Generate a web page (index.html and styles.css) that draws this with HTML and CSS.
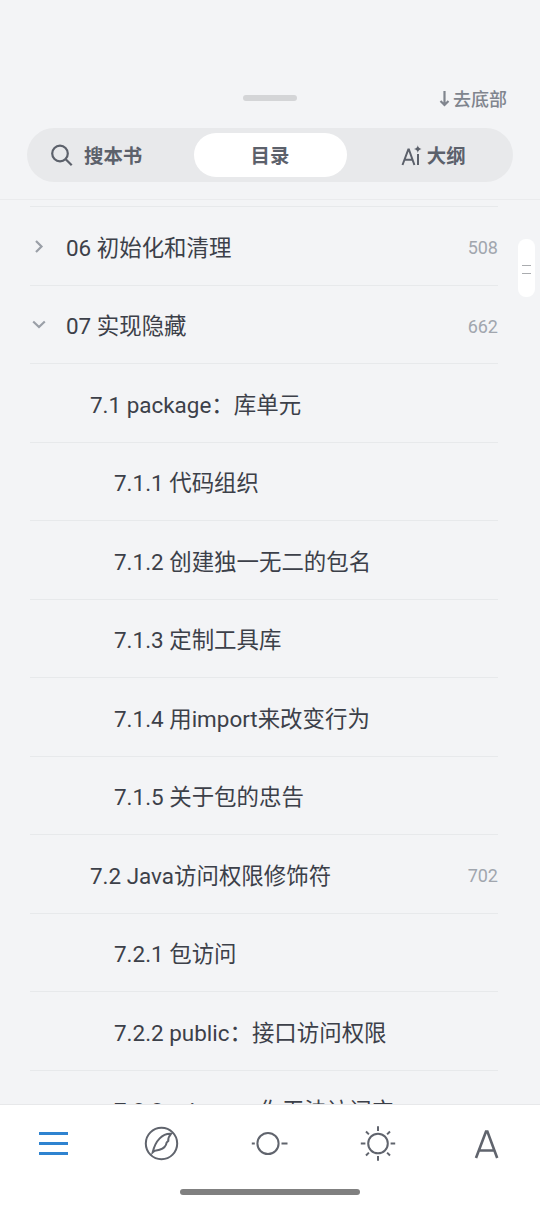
FILE: index.html
```html
<!DOCTYPE html>
<html lang="zh-CN">
<head>
    <meta charset="utf-8">
    <title>目录</title>
    <link rel="stylesheet" href="styles.css">
</head>
<body>
    <div class="sheet">
        <header class="header">
            <div class="handle-row">
                <span class="handle"></span>
                <span class="to-bottom">
                    <svg width="11" height="17" viewBox="0 0 11 17"><path d="M5.5 1v14M1.5 11l4 4 4-4"/></svg><span>去底部</span>
                </span>
            </div>
            <div class="tabs">
                <div class="tab tab-search">
                    <svg width="24" height="24" viewBox="0 0 24 24"><circle cx="10" cy="10.5" r="7.8"/><path d="M15.7 16.2l6 6"/></svg>
                    <span>搜本书</span>
                </div>
                <div class="tab active"><span>目录</span></div>
                <div class="tab tab-outline">
                    <svg width="21" height="21" viewBox="0 0 21 21">
                        <path d="M1.5 20L7.3 4.5h.6L13.4 20M3.6 14.8h7.8M17 9v11"/>
                        <path class="spark" d="M16.8.3q.6 3.2 3.8 3.8-3.2.6-3.8 3.8-.6-3.2-3.8-3.8 3.2-.6 3.8-3.8z"/>
                    </svg>
                    <span>大纲</span>
                </div>
            </div>
        </header>

        <main class="toc">
            <div class="row"><svg class="arrow" width="18" height="18" viewBox="0 0 18 18"><path d="M6 3L11.5 8.5 6 14"/></svg><span class="title">06 初始化和清理</span><span class="page">508</span></div>
            <div class="row"><svg class="arrow" width="18" height="18" viewBox="0 0 18 18"><path d="M3.2 5.5L9 11 14.8 5.5"/></svg><span class="title">07 实现隐藏</span><span class="page">662</span></div>
            <div class="row level-2"><span class="title">7.1 package：库单元</span></div>
            <div class="row level-3"><span class="title">7.1.1 代码组织</span></div>
            <div class="row level-3"><span class="title">7.1.2 创建独一无二的包名</span></div>
            <div class="row level-3"><span class="title">7.1.3 定制工具库</span></div>
            <div class="row level-3"><span class="title">7.1.4 用import来改变行为</span></div>
            <div class="row level-3"><span class="title">7.1.5 关于包的忠告</span></div>
            <div class="row level-2"><span class="title">7.2 Java访问权限修饰符</span><span class="page">702</span></div>
            <div class="row level-3"><span class="title">7.2.1 包访问</span></div>
            <div class="row level-3"><span class="title">7.2.2 public：接口访问权限</span></div>
            <div class="row level-3"><span class="title">7.2.3 private：你无法访问它</span></div>
            <div class="scroll-thumb"></div>
        </main>

        <footer class="footer">
            <nav class="nav">
                <svg class="nav-active" width="36" height="36" viewBox="0 0 36 36"><path d="M3 7.5h29M3 17.5h29M3 27.5h29"/></svg>
                <svg width="36" height="36" viewBox="0 0 36 36"><circle cx="17.5" cy="17.5" r="15.7"/><path d="M27 7.8C18.5 7.2 11.5 14.5 8.7 26.2C11 23.8 13 24.6 15.5 23.8C20 22.3 22.2 20 22.6 16.6L24.3 14.8C24 12.5 25.5 9.5 27 7.8z"/></svg>
                <svg width="36" height="36" viewBox="0 0 36 36"><circle cx="16" cy="17.5" r="10.6"/><path d="M-.2 17.5h3M29.5 17.5h6"/></svg>
                <svg width="36" height="36" viewBox="0 0 36 36"><g transform="translate(0 -.5)"><circle cx="18" cy="18" r="9.8"/><path d="M18 .8v4.6M18 30.6v4.6M.8 18h4.6M30.6 18h4.6M6 6l2.9 2.9M27.1 27.1L30 30M6 30l2.9-2.9M27.1 8.9L30 6"/></g></svg>
                <svg class="nav-font" width="36" height="36" viewBox="0 0 36 36"><path d="M8 32L18 5.5h1.4L29.2 32M11.8 24.5h13.8"/></svg>
            </nav>
            <div class="home-bar"></div>
        </footer>
    </div>
</body>
</html>
```
FILE: styles.css
```css
body {
    margin: 0;
    background: #f3f4f6;
    color: #3c4049;
    font-family: Roboto, "Noto Sans CJK SC", sans-serif;
}

svg {
    flex: none;
    fill: none;
    stroke: currentColor;
    stroke-width: 2.2;
    overflow: visible;
}

.sheet {
    display: flex;
    flex-direction: column;
    height: 1206px;
    overflow: hidden;
}

.header {
    box-sizing: border-box;
    height: 200px;
    flex: none;
    padding: 83px 27px 0;
    border-bottom: 1px solid #eaebed;
}

.handle-row {
    display: grid;
    grid-template-columns: 1fr 54px 1fr;
    align-items: center;
    height: 30px;
}

.handle {
    grid-column: 2;
    height: 6px;
    border-radius: 3px;
    background: #d4d5d7;
}

.to-bottom {
    display: flex;
    align-items: center;
    justify-content: flex-end;
    gap: 3px;
    padding-right: 6px;
    font-size: 18px;
    font-weight: 500;
    color: #80858e;
}

.tabs {
    display: grid;
    grid-template-columns: 1fr 153px 1fr;
    gap: 5px;
    box-sizing: border-box;
    height: 54px;
    margin-top: 15px;
    padding: 5px;
    border-radius: 27px;
    background: #e8e9eb;
}

.tab {
    display: flex;
    align-items: center;
    justify-content: center;
    border-radius: 22px;
    font-size: 19.4px;
    font-weight: 600;
    color: #5c616b;
}

.tab span {
    padding-bottom: 2px;
}

.tab.active {
    background: #fff;
}

.tab-search {
    justify-content: flex-start;
    gap: 10px;
    padding-left: 18px;
}

.tab-outline {
    gap: 5px;
    padding-left: 7px;
}

.tab-outline svg {
    stroke-width: 2;
}

.spark {
    fill: currentColor;
    stroke: none;
}

.toc {
    position: relative;
    flex: 1;
    min-height: 0;
    padding: 6.4px 42px 0 30px;
    overflow: hidden;
}

.row {
    display: flex;
    align-items: center;
    box-sizing: border-box;
    height: 78.5px;
    padding-top: 1px;
    border-top: 1px solid #e7e9eb;
}

.arrow {
    width: 18px;
    margin-right: 18px;
    color: #9a9fa7;
}

.level-2 {
    padding-left: 60px;
}

.level-3 {
    padding-left: 84px;
}

.title {
    flex: 1;
    padding-bottom: 2px;
    font-size: 22.45px;
    white-space: nowrap;
}

.page {
    padding-top: 2px;
    font-size: 18px;
    color: #a1a6ae;
}

/* floats over the right edge of the list */
.scroll-thumb {
    position: absolute;
    top: 39px;
    right: 5px;
    display: grid;
    place-items: center;
    width: 17px;
    height: 58px;
    border-radius: 8px;
    background: #fff;
}

.scroll-thumb::before {
    content: "";
    width: 9px;
    height: 7px;
    margin-top: 2px;
    border-top: 1px solid #aaacaf;
    border-bottom: 1px solid #aaacaf;
}

.footer {
    box-sizing: border-box;
    flex: none;
    height: 102px;
    border-top: 1px solid #e7e8ea;
    background: #fff;
}

.nav {
    display: grid;
    grid-template-columns: repeat(5, 1fr);
    justify-items: center;
    align-items: center;
    height: 77px;
    color: #60646d;
}

.nav svg {
    stroke-width: 2;
}

.nav .nav-active {
    color: #2f83d0;
    stroke-width: 3;
}

.nav .nav-font {
    stroke-width: 2.6;
}

.home-bar {
    width: 180px;
    height: 6px;
    margin: 7px auto 0;
    border-radius: 3px;
    background: #808080;
}
```
